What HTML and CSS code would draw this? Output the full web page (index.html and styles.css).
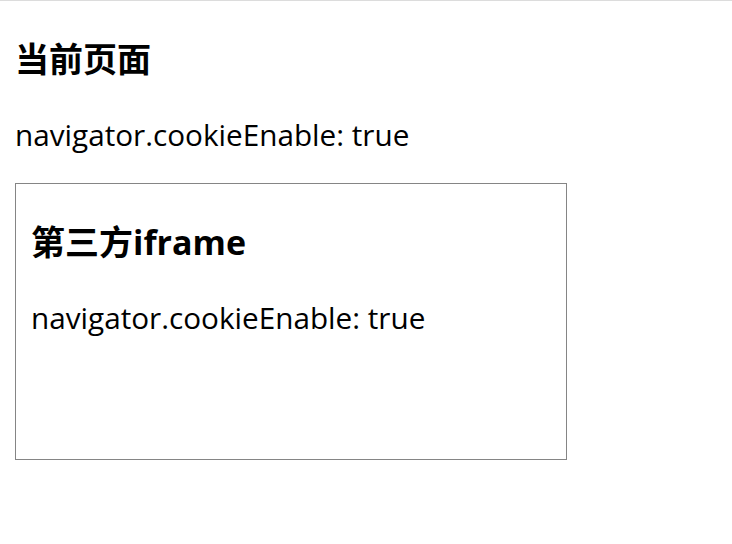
FILE: index.html
```html
<!DOCTYPE html>
<html lang="zh-CN">
<head>
<meta charset="utf-8">
<title>当前页面</title>
<link rel="stylesheet" href="styles.css">
</head>
<body>
<div class="page">
  <h3 class="title">当前页面</h3>
  <p class="info">navigator.cookieEnable: true</p>
  <div class="frame">
    <h3 class="title">第三方iframe</h3>
    <p class="info">navigator.cookieEnable: true</p>
  </div>
</div>
</body>
</html>
```

FILE: styles.css
```css
html, body {
  margin: 0;
  padding: 0;
  background: #ffffff;
}
body {
  border-top: 1px solid #dcdcdc;
  font-family: "Open Sans", "Noto Sans CJK SC", sans-serif;
  color: #000000;
}
.page {
  padding: 0 15px;
}
.title {
  margin: 0;
  padding-top: 36px;
  font-size: 34px;
  line-height: 44px;
  font-weight: 700;
  font-family: "Open Sans", "Noto Sans CJK SC", sans-serif;
}
.info {
  margin: 0;
  padding-top: 35px;
  font-size: 29.7px;
  line-height: 38px;
}
.frame {
  margin-top: 29px;
  width: 520px;
  height: 275px;
  border: 1px solid #858585;
  padding: 0 15px;
  box-sizing: content-box;
}
```
